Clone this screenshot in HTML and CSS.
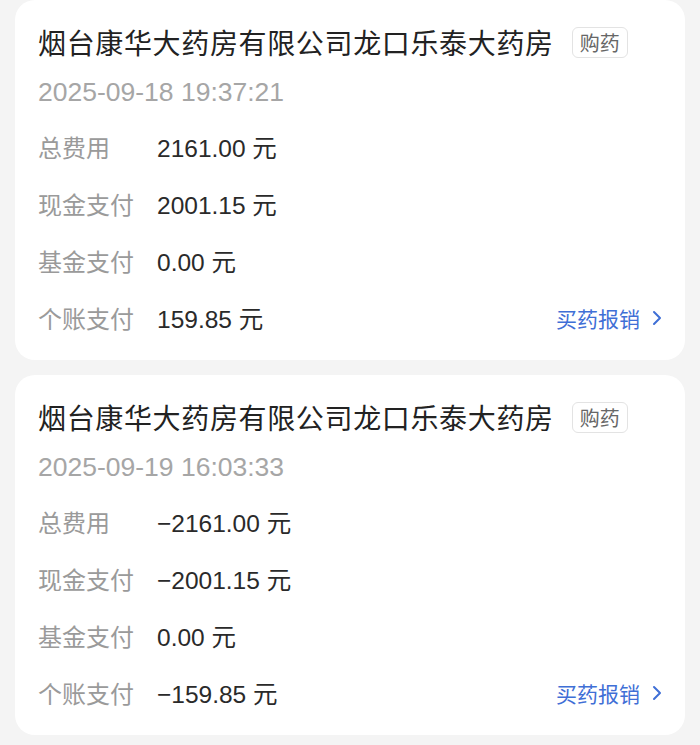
FILE: index.html
```html
<!DOCTYPE html>
<html lang="zh">
<head>
<meta charset="utf-8">
<link rel="stylesheet" href="styles.css">
</head>
<body>
<div class="page">
  <div class="card">
    <div class="head">
      <span class="title">烟台康华大药房有限公司龙口乐泰大药房</span>
      <span class="tag">购药</span>
    </div>
    <div class="date">2025-09-18 19:37:21</div>
    <div class="row"><span class="label">总费用</span><span class="value">2161.00 元</span></div>
    <div class="row"><span class="label">现金支付</span><span class="value">2001.15 元</span></div>
    <div class="row"><span class="label">基金支付</span><span class="value">0.00 元</span></div>
    <div class="row"><span class="label">个账支付</span><span class="value">159.85 元</span>
      <span class="link">买药报销<svg class="chev" width="10" height="16" viewBox="0 0 10 16"><polyline points="2,2 8,8 2,14" fill="none" stroke="#3f6fd6" stroke-width="2" stroke-linecap="round" stroke-linejoin="round"/></svg></span>
    </div>
  </div>
  <div class="card">
    <div class="head">
      <span class="title">烟台康华大药房有限公司龙口乐泰大药房</span>
      <span class="tag">购药</span>
    </div>
    <div class="date">2025-09-19 16:03:33</div>
    <div class="row"><span class="label">总费用</span><span class="value">−2161.00 元</span></div>
    <div class="row"><span class="label">现金支付</span><span class="value">−2001.15 元</span></div>
    <div class="row"><span class="label">基金支付</span><span class="value">0.00 元</span></div>
    <div class="row"><span class="label">个账支付</span><span class="value">−159.85 元</span>
      <span class="link">买药报销<svg class="chev" width="10" height="16" viewBox="0 0 10 16"><polyline points="2,2 8,8 2,14" fill="none" stroke="#3f6fd6" stroke-width="2" stroke-linecap="round" stroke-linejoin="round"/></svg></span>
    </div>
  </div>
</div>
</body>
</html>
```
FILE: styles.css
```css
html, body {
  margin: 0;
  padding: 0;
  background: #f4f4f4;
}
body {
  font-family: "Liberation Sans", "Noto Sans CJK SC", sans-serif;
  width: 700px;
  height: 745px;
  overflow: hidden;
}
.page {
  display: flex;
  flex-direction: column;
  gap: 15px;
  padding: 0 15px;
}
.card {
  background: #ffffff;
  border-radius: 20px;
  height: 360px;
  box-sizing: border-box;
  padding: 22px 23px 0 23px;
}
.head {
  display: flex;
  align-items: center;
  gap: 18px;
  height: 40px;
}
.title {
  font-family: "Noto Sans CJK SC", sans-serif;
  font-size: 28px;
  color: #222222;
  letter-spacing: 0.65px;
}
.tag {
  font-family: "Noto Sans CJK SC", sans-serif;
  font-size: 20px;
  color: #666666;
  border: 1px solid #e3e3e3;
  border-radius: 6px;
  padding: 0 7px;
  height: 29px;
  line-height: 29px;
}
.date {
  font-size: 26.5px;
  color: #a6a6a6;
  margin-top: 12px;
  height: 36px;
  line-height: 36px;
  margin-bottom: 8px;
}
.row {
  display: flex;
  align-items: center;
  height: 57px;
}
.label {
  font-family: "Noto Sans CJK SC", sans-serif;
  width: 119px;
  font-size: 24px;
  color: #9a9a9a;
}
.value {
  font-size: 24.5px;
  color: #2a2a2a;
}
.link {
  margin-left: auto;
  display: flex;
  align-items: center;
  gap: 12px;
  font-family: "Noto Sans CJK SC", sans-serif;
  font-size: 21px;
  color: #3f6fd6;
}
.chev {
  display: block;
}
```
